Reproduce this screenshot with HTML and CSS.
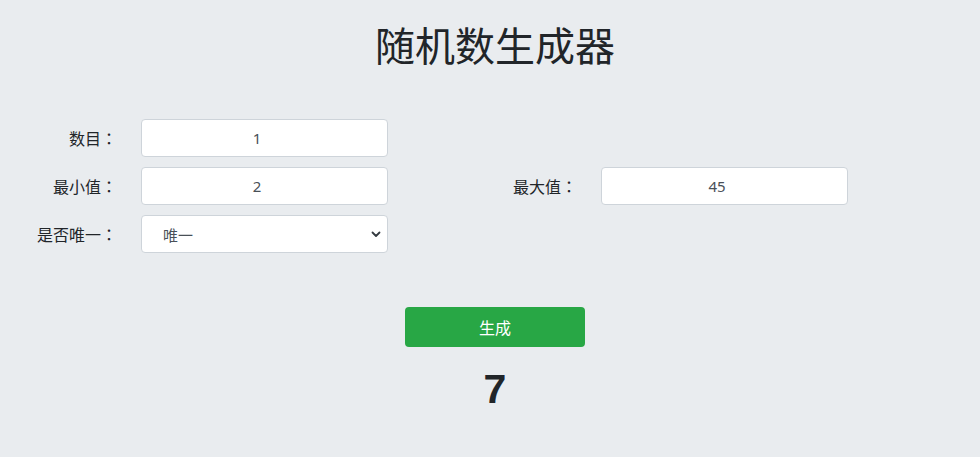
FILE: index.html
```html
<!DOCTYPE html>
<html lang="zh">
<head>
<meta charset="utf-8">
<title>随机数生成器</title>
<link rel="stylesheet" href="styles.css">
</head>
<body>
<div class="page">
  <h1 class="title">随机数生成器</h1>
  <div class="form">
    <label class="label">数目<span class="colon">：</span></label>
    <input class="field num" type="text" value="1">
    <span class="empty"></span>
    <span class="empty"></span>

    <label class="label">最小值<span class="colon">：</span></label>
    <input class="field num" type="text" value="2">
    <label class="label">最大值<span class="colon">：</span></label>
    <input class="field num" type="text" value="45">

    <label class="label">是否唯一<span class="colon">：</span></label>
    <div class="select-wrap">
      <select class="field select">
        <option>唯一</option>
        <option>不唯一</option>
      </select>
      <svg class="chev" width="10" height="8" viewBox="0 0 10 8"><path d="M1.5 2.5 L5 6 L8.5 2.5" fill="none" stroke="#343a40" stroke-width="1.8" stroke-linecap="round" stroke-linejoin="round"/></svg>
    </div>
    <span class="empty"></span>
    <span class="empty"></span>
  </div>
  <div class="actions">
    <button class="btn" type="button">生成</button>
    <div class="result">7</div>
  </div>
</div>
</body>
</html>
```

FILE: styles.css
```css
html, body {
  margin: 0;
  padding: 0;
  background: #e9ecef;
  color: #212529;
  font-family: "Noto Sans", "Noto Sans CJK SC", sans-serif;
}
.page {
  width: 980px;
  height: 457px;
  overflow: hidden;
}
.title {
  margin: 20px 0 0 10px;
  text-align: center;
  font-family: "Noto Sans CJK SC", sans-serif;
  font-weight: 400;
  font-size: 40px;
  line-height: 48px;
  color: #212529;
}
.form {
  margin-top: 51px;
  display: grid;
  grid-template-columns: 117px 247px 165px 247px;
  grid-auto-rows: 38px;
  column-gap: 24px;
  row-gap: 10px;
}
.label {
  display: flex;
  align-items: center;
  justify-content: flex-end;
  font-family: "Noto Sans CJK SC", sans-serif;
  font-size: 16px;
  color: #212529;
}
.colon {
  font-family: "Noto Sans CJK TC", sans-serif;
}
.field {
  box-sizing: border-box;
  width: 247px;
  height: 38px;
  margin: 0;
  border: 1px solid #ced4da;
  border-radius: 4px;
  background: #fff;
  color: #495057;
  font-family: "Noto Sans", "Noto Sans CJK SC", sans-serif;
  font-size: 15px;
  text-align: center;
  outline: none;
}
.num {
  padding: 0 15px 0 0;
}
.select-wrap {
  position: relative;
  width: 247px;
  height: 38px;
}
.select {
  appearance: none;
  -webkit-appearance: none;
  text-align: left;
  padding: 0 0 0 21px;
  font-family: "Noto Sans CJK SC", sans-serif;
  font-size: 15px;
  color: #495057;
}
.chev {
  position: absolute;
  right: 7px;
  top: 15px;
  pointer-events: none;
}
.actions {
  margin: 54px 0 0 10px;
  display: flex;
  flex-direction: column;
  align-items: center;
}
.btn {
  width: 180px;
  height: 40px;
  border: 0;
  border-radius: 4px;
  background: #28a745;
  color: #fff;
  font-family: "Noto Sans CJK SC", sans-serif;
  font-size: 16px;
  padding: 0;
}
.result {
  margin-top: 16px;
  font-family: "Liberation Sans", sans-serif;
  font-weight: 700;
  font-size: 41px;
  line-height: 52px;
  color: #212529;
}
```
